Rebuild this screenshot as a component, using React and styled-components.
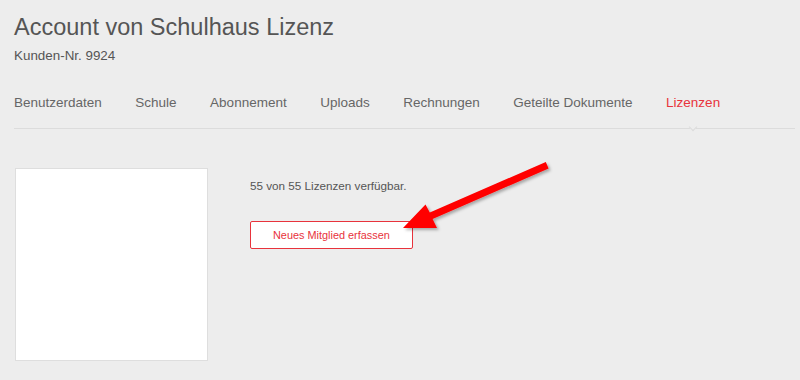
import React from "react";
import styled, { createGlobalStyle } from "styled-components";

const GlobalStyle = createGlobalStyle`
  html, body {
    margin: 0;
    padding: 0;
    background: #ededed;
    font-family: "Liberation Sans", Arial, sans-serif;
  }
`;

const Page = styled.div`
  position: relative;
  width: 800px;
  height: 380px;
  overflow: hidden;
  padding: 0 5px 0 14px;
  box-sizing: border-box;
`;

const Header = styled.header`
  padding-top: 13px;
`;

const Title = styled.h1`
  margin: 0;
  font-size: 23.5px;
  line-height: 28px;
  font-weight: normal;
  color: #555;
`;

const CustomerNo = styled.div`
  margin-top: 7px;
  font-size: 13.4px;
  line-height: 16px;
  color: #555;
`;

const Tabs = styled.nav`
  display: flex;
  gap: 33.5px;
  margin-top: 31px;
  height: 33px;
  border-bottom: 1px solid #dcdcdc;
`;

const Tab = styled.a`
  position: relative;
  font-size: 13.5px;
  line-height: 16px;
  color: ${(p) => (p.$active ? "#e8333c" : "#666")};
  text-decoration: none;
  cursor: pointer;

  ${(p) =>
    p.$active &&
    `
    &::after {
      content: "";
      position: absolute;
      left: 50%;
      top: 29px;
      width: 5px;
      height: 5px;
      margin-left: -3px;
      background: #ededed;
      border-right: 1px solid #dcdcdc;
      border-bottom: 1px solid #dcdcdc;
      transform: rotate(45deg);
    }
  `}
`;

const Content = styled.section`
  display: flex;
  gap: 42px;
  margin-top: 39px;
  padding-left: 1px;
`;

const Picture = styled.div`
  width: 191px;
  height: 191px;
  background: #fff;
  border: 1px solid #dedede;
`;

const Info = styled.div`
  padding-top: 11px;
`;

const Available = styled.p`
  margin: 0;
  font-size: 11.7px;
  line-height: 14px;
  color: #555;
`;

const Button = styled.button`
  margin-top: 28px;
  height: 28px;
  padding: 0 22px;
  background: #fff;
  border: 1px solid #e8333c;
  border-radius: 2px;
  color: #e8333c;
  font-family: "Liberation Sans", Arial, sans-serif;
  font-size: 10.9px;
  cursor: pointer;
`;

const Arrow = styled.svg`
  position: absolute;
  left: 0;
  top: 0;
  pointer-events: none;
`;

const tabs = [
  "Benutzerdaten",
  "Schule",
  "Abonnement",
  "Uploads",
  "Rechnungen",
  "Geteilte Dokumente",
  "Lizenzen",
];

export default function App() {
  return (
    <>
      <GlobalStyle />
      <Page>
        <Header>
          <Title>Account von Schulhaus Lizenz</Title>
          <CustomerNo>Kunden-Nr. 9924</CustomerNo>
        </Header>
        <Tabs>
          {tabs.map((t) => (
            <Tab key={t} $active={t === "Lizenzen"}>
              {t}
            </Tab>
          ))}
        </Tabs>
        <Content>
          <Picture />
          <Info>
            <Available>55 von 55 Lizenzen verfügbar.</Available>
            <Button>Neues Mitglied erfassen</Button>
          </Info>
        </Content>
        <Arrow width="800" height="380">
          <defs>
            <filter id="shadow" x="-20%" y="-20%" width="140%" height="140%">
              <feDropShadow dx="2" dy="2" stdDeviation="1.5" floodColor="#000" floodOpacity="0.3" />
            </filter>
          </defs>
          <polygon
            filter="url(#shadow)"
            fill="#ff0000"
            points="545.8,162 548.6,168.5 432.6,219 437,228 403,228 425.5,204.5 429.8,212.5"
          />
        </Arrow>
      </Page>
    </>
  );
}
